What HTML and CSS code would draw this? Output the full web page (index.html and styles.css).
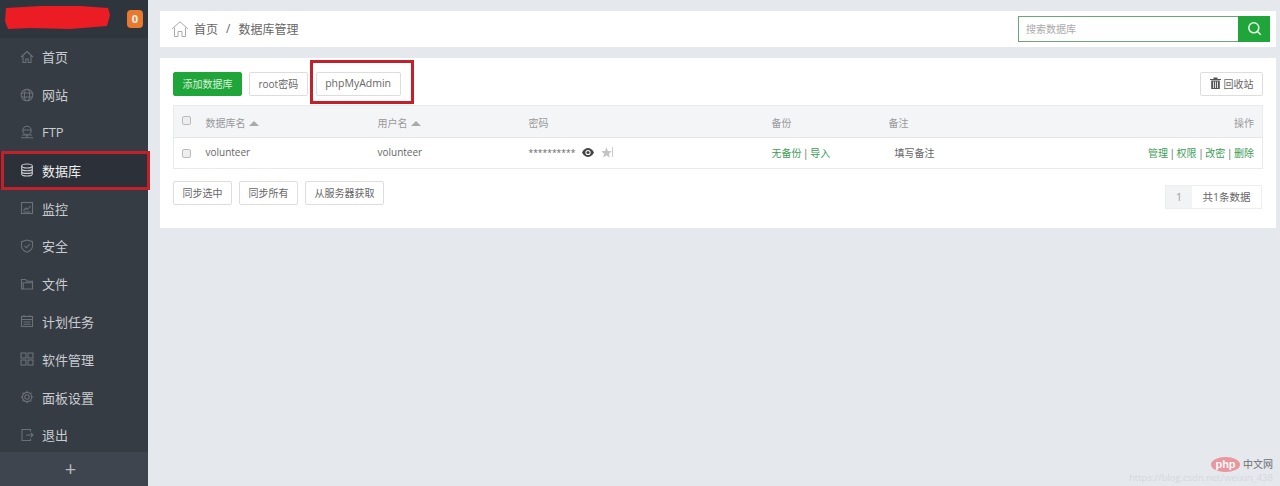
FILE: index.html
```html
<!DOCTYPE html>
<html lang="zh-CN">
  <head>
    <meta charset="UTF-8" />
    <meta name="viewport" content="width=device-width, initial-scale=1.0" />
    <title>数据库管理</title>
    <link rel="stylesheet" href="styles.css">
  </head>
  <body>
    <aside class="sidebar">
      <div class="logo-bar">
        <svg class="scribble" width="112" height="26" viewBox="0 0 112 26">
          <path d="M6 4 L40 2 L80 2 L108 4 L110 11 L107 22 L70 25 L30 24 L8 25 L5 17 Z" fill="#ec1c24" />
        </svg>
        <span class="badge">0</span>
      </div>
      <nav class="nav">
        <a class="nav-item">
          <svg class="nav-icon" viewBox="0 0 14 14"><path d="M1 7 L7 1.5 L13 7 M3 6 V12.5 H5.8 V9 H8.2 V12.5 H11 V6" /></svg>
          <span>首页</span>
        </a>
        <a class="nav-item">
          <svg class="nav-icon" viewBox="0 0 14 14"><circle cx="7" cy="7" r="5.8" /><ellipse cx="7" cy="7" rx="2.6" ry="5.8" /><path d="M1.5 5 H12.5 M1.5 9 H12.5" /></svg>
          <span>网站</span>
        </a>
        <a class="nav-item">
          <svg class="nav-icon" viewBox="0 0 14 14"><circle cx="7" cy="5.5" r="4.2" /><path d="M3 5 H11 M2 10 H12 M1 12.8 H13 M7 10 V12.8" /></svg>
          <span>FTP</span>
        </a>
        <a class="nav-item active">
          <svg class="nav-icon" viewBox="0 0 14 14"><ellipse cx="7" cy="3" rx="5.3" ry="2" /><path d="M1.7 3 V11 C1.7 12.2 3.8 13 7 13 C10.2 13 12.3 12.2 12.3 11 V3 M1.7 5.8 C1.7 7 3.8 7.8 7 7.8 C10.2 7.8 12.3 7 12.3 5.8 M1.7 8.4 C1.7 9.6 3.8 10.4 7 10.4 C10.2 10.4 12.3 9.6 12.3 8.4" /></svg>
          <span>数据库</span>
        </a>
        <a class="nav-item">
          <svg class="nav-icon" viewBox="0 0 14 14"><rect x="1.5" y="1.5" width="11" height="11" /><path d="M3.5 9.5 L6 7 L7.5 8.5 L10.5 5 M3.5 11 H10.5" /></svg>
          <span>监控</span>
        </a>
        <a class="nav-item">
          <svg class="nav-icon" viewBox="0 0 14 14"><path d="M7 1 L12.5 2.6 V7 C12.5 10 10 12 7 13.2 C4 12 1.5 10 1.5 7 V2.6 Z M4.5 6.8 L6.5 8.8 L9.8 5" /></svg>
          <span>安全</span>
        </a>
        <a class="nav-item">
          <svg class="nav-icon" viewBox="0 0 14 14"><path d="M1.5 12 V2.5 H5.5 L7 4.2 H12.5 V5.8 M1.5 12 H12.5 V5.8 H3.2 V12" /></svg>
          <span>文件</span>
        </a>
        <a class="nav-item">
          <svg class="nav-icon" viewBox="0 0 14 14"><rect x="1.5" y="2.5" width="11" height="10" /><path d="M1.5 5.5 H12.5 M4 1 V3 M10 1 V3 M3.5 8 H10.5 M3.5 10.3 H10.5" /></svg>
          <span>计划任务</span>
        </a>
        <a class="nav-item">
          <svg class="nav-icon" viewBox="0 0 14 14"><rect x="1" y="1" width="5" height="5" /><rect x="8" y="1" width="5" height="5" /><rect x="1" y="8" width="5" height="5" /><rect x="8" y="8" width="5" height="5" /></svg>
          <span>软件管理</span>
        </a>
        <a class="nav-item">
          <svg class="nav-icon" viewBox="0 0 14 14"><circle cx="7" cy="7" r="2.2" /><circle cx="7" cy="7" r="4.6" /><path d="M7 .8 V2.4 M7 11.6 V13.2 M.8 7 H2.4 M11.6 7 H13.2 M2.6 2.6 L3.8 3.8 M10.2 10.2 L11.4 11.4 M2.6 11.4 L3.8 10.2 M10.2 3.8 L11.4 2.6" /></svg>
          <span>面板设置</span>
        </a>
        <a class="nav-item">
          <svg class="nav-icon" viewBox="0 0 14 14"><path d="M10.5 3.5 V1.5 H2 V12.5 H10.5 V10.5 M6 7 H13 M10.8 4.8 L13 7 L10.8 9.2" /></svg>
          <span>退出</span>
        </a>
      </nav>
      <div class="sidebar-foot">+</div>
    </aside>

    <main class="main">
      <header class="crumb-bar">
        <div class="crumbs">
          <svg class="crumb-home" viewBox="0 0 18 18"><path d="M1 9 L9 1.8 L17 9 M3.5 7.5 V16.5 H7 V11.5 H11 V16.5 H14.5 V7.5" /></svg>
          <span>首页</span>
          <span class="crumb-sep">/</span>
          <span>数据库管理</span>
        </div>
        <div class="search">
          <input class="search-input" type="text" placeholder="搜索数据库" />
          <button class="search-btn">
            <svg width="15" height="15" viewBox="0 0 15 15"><circle cx="6.8" cy="6.8" r="5" /><path d="M10.5 10.5 L13.8 13.8" /></svg>
          </button>
        </div>
      </header>

      <section class="panel">
        <div class="toolbar">
          <div class="btn-group">
            <button class="btn btn-green">添加数据库</button>
            <button class="btn">root密码</button>
            <button class="btn btn-pma">phpMyAdmin</button>
          </div>
          <button class="btn btn-recycle">
            <svg width="11" height="12" viewBox="0 0 11 12"><path d="M0 2 H11 V3 H0 Z M3.5 2 V.5 H7.5 V2 M1.2 3.5 H9.8 V12 H1.2 Z" fill="#555" /><path d="M3.5 4.5 V11 M5.5 4.5 V11 M7.5 4.5 V11" stroke="#fff" stroke-width=".8" /></svg>
            回收站
          </button>
        </div>

        <table class="db-table">
          <colgroup>
            <col class="col-check" /><col class="col-name" /><col class="col-user" /><col class="col-pass" /><col class="col-backup" /><col />
            <col class="col-ops" />
          </colgroup>
          <thead>
            <tr>
              <th><input type="checkbox" class="check" /></th>
              <th>数据库名 <i class="sort"></i></th>
              <th>用户名 <i class="sort"></i></th>
              <th>密码</th>
              <th>备份</th>
              <th>备注</th>
              <th class="ops">操作</th>
            </tr>
          </thead>
          <tbody>
            <tr>
              <td><input type="checkbox" class="check" /></td>
              <td>volunteer</td>
              <td>volunteer</td>
              <td>
                <div class="pass">
                  <span class="stars">**********</span>
                  <svg width="12" height="9" viewBox="0 0 12 9"><path d="M0 4.5 C2 1 4 0 6 0 C8 0 10 1 12 4.5 C10 8 8 9 6 9 C4 9 2 8 0 4.5 Z" fill="#444" /><circle cx="6" cy="4.5" r="2.6" fill="#fff" /><circle cx="6" cy="4.5" r="1.6" fill="#444" /></svg>
                  <svg width="11" height="11" viewBox="0 0 11 11"><path d="M5.5 .5 L7 4 L10.8 4.3 L7.9 6.7 L8.8 10.5 L5.5 8.5 L2.2 10.5 L3.1 6.7 L.2 4.3 L4 4 Z" fill="#c4c4c4" /></svg>
                  <span class="cursor"></span>
                </div>
              </td>
              <td class="links"><a class="link">无备份</a> | <a class="link">导入</a></td>
              <td class="remark">填写备注</td>
              <td class="ops links"><a class="link">管理</a> | <a class="link">权限</a> | <a class="link">改密</a> | <a class="link">删除</a></td>
            </tr>
          </tbody>
        </table>

        <div class="table-foot">
          <div class="btn-group">
            <button class="btn">同步选中</button>
            <button class="btn">同步所有</button>
            <button class="btn">从服务器获取</button>
          </div>
          <div class="pager">
            <span class="page-num">1</span>
            <span class="page-total">共1条数据</span>
          </div>
        </div>
      </section>
    </main>

    <div class="watermark">
      <div class="wm-top"><span class="wm-logo">php</span><span class="wm-cn">中文网</span></div>
      <div class="wm-url">https://blog.csdn.net/weixin_438</div>
    </div>
  </body>
</html>
```

FILE: styles.css
```css
* {
  box-sizing: border-box;
}

html,
body {
  height: 486px;
  margin: 0;
  overflow: hidden;
}

body {
  display: flex;
  background-color: #e5e8ed;
  font-family: "Open Sans", "Noto Sans CJK SC", sans-serif;
  font-size: 12px;
  color: #666;
}

/* sidebar */
.sidebar {
  width: 148px;
  flex-shrink: 0;
  display: flex;
  flex-direction: column;
  background-color: #363c44;
  color: #c9ccd0;
}

.logo-bar {
  height: 38px;
  flex-shrink: 0;
  position: relative;
  display: flex;
  justify-content: flex-end;
  align-items: center;
  padding-right: 5px;
  background-color: #2f353c;
}

.scribble {
  position: absolute;
  left: 0;
  top: 4px;
}

.badge {
  width: 16px;
  height: 18px;
  border-radius: 4px;
  background-color: #e8792f;
  color: #f5f0e8;
  font-size: 11px;
  font-weight: 700;
  line-height: 18px;
  text-align: center;
}

.nav {
  flex: 1;
  min-height: 0;
}

.nav-item {
  height: 37.8px;
  display: flex;
  align-items: center;
  gap: 8px;
  padding-left: 20px;
  position: relative;
  font-size: 13px;
}

.nav-icon {
  width: 14px;
  height: 14px;
  fill: none;
  stroke: #6c7178;
  stroke-width: 1.1;
}

.nav-item.active {
  background-color: #2c3038;
  color: #f0f0f0;
}

.nav-item.active .nav-icon {
  stroke: #c9ccd0;
}

.nav-item.active::after {
  content: "";
  position: absolute;
  left: 1px;
  right: -2px;
  top: 0;
  bottom: -1px;
  border: 3px solid #c2202b;
}

.sidebar-foot {
  height: 34px;
  flex-shrink: 0;
  position: relative;
  padding-right: 7px;
  background-color: #3f454e;
  color: #b5b8bc;
  font-size: 20px;
  line-height: 34px;
  text-align: center;
}

/* main */
.main {
  flex: 1;
  padding: 11px 4px 0 12px;
}

.crumb-bar {
  height: 36px;
  display: flex;
  justify-content: space-between;
  align-items: center;
  padding: 0 6px 0 11px;
  margin-bottom: 11px;
  background-color: #fff;
}

.crumbs {
  display: flex;
  align-items: center;
  gap: 8px;
  margin-top: -1px;
  font-size: 12px;
  color: #666;
}

.crumb-home {
  width: 18px;
  height: 18px;
  margin-right: -3px;
  fill: none;
  stroke: #aaa;
  stroke-width: 1;
}

.search {
  display: flex;
  width: 252px;
  height: 26px;
  margin-top: -1px;
}

.search-input {
  flex: 1;
  min-width: 0;
  padding: 0 7px;
  border: 1px solid #6aa67a;
  border-right: none;
  font-family: inherit;
  font-size: 10px;
  outline: none;
}

.search-input::placeholder {
  color: #aaa;
}

.search-btn {
  width: 32px;
  padding: 0;
  border: none;
  background-color: #20a53a;
  display: flex;
  justify-content: center;
  align-items: center;
}

.search-btn svg {
  fill: none;
  stroke: #e4f3e6;
  stroke-width: 1.6;
}

.panel {
  height: 170px;
  padding: 14px 13px 0;
  background-color: #fff;
  position: relative;
}

.toolbar,
.table-foot {
  display: flex;
  justify-content: space-between;
}

.toolbar {
  margin-bottom: 9px;
}

.btn-group {
  display: flex;
  gap: 7px;
}

.btn {
  height: 24px;
  padding: 0 8.5px 2px;
  background-color: #fff;
  border: 1px solid #ddd;
  border-radius: 2px;
  color: #666;
  font-family: inherit;
  font-size: 10px;
  white-space: nowrap;
}

.btn-green {
  background-color: #20a53a;
  border-color: #20a53a;
  color: #d8f0dc;
}

.btn-pma {
  position: relative;
  margin-left: 1px;
  font-size: 10.5px;
}

.btn-pma::after {
  content: "";
  position: absolute;
  left: -7px;
  right: -14px;
  top: -13px;
  bottom: -9px;
  border: 3px solid #c2202b;
}

.btn-recycle {
  display: flex;
  align-items: center;
  gap: 3px;
}

.db-table {
  width: 1090px;
  table-layout: fixed;
  border-collapse: collapse;
  border: 1px solid #e8eaed;
}

.col-check { width: 32px; }
.col-name { width: 172px; }
.col-user { width: 151px; }
.col-pass { width: 243px; }
.col-backup { width: 117px; }
.col-ops { width: 300px; }

.db-table th,
.db-table td {
  padding: 0;
  text-align: left;
  font-size: 10px;
  font-weight: 400;
}

.db-table th {
  height: 32px;
  padding-top: 1px;
  background-color: #f4f5f7;
  color: #999;
  border-bottom: 1px solid #e4e6e9;
}

.db-table td {
  height: 31px;
  padding-bottom: 2px;
  color: #666;
}

.db-table .ops {
  text-align: right;
  padding-right: 8px;
}

.links {
  word-spacing: -1px;
}

.check {
  appearance: none;
  width: 9px;
  height: 9px;
  margin: 0 0 0 8px;
  vertical-align: middle;
  background-color: #eee;
  border: 1px solid #bbb;
  border-radius: 2px;
}

thead .check {
  margin-top: -5px;
}

.sort {
  display: inline-block;
  margin-left: 1px;
  border-left: 5px solid transparent;
  border-right: 5px solid transparent;
  border-bottom: 5px solid #aaa;
  vertical-align: 1px;
}

.pass {
  display: flex;
  align-items: center;
  gap: 7px;
}

.stars {
  font-size: 8.5px;
}

.cursor {
  width: 1px;
  height: 10px;
  margin-left: -7px;
  background-color: #ccc;
}

.link {
  color: #3d9c56;
}

.db-table td.remark {
  padding-left: 6px;
}

.table-foot {
  margin-top: 12px;
}

.pager {
  display: flex;
  height: 24px;
  margin: 4px 1px 0 0;
  border: 1px solid #eee;
  line-height: 22px;
  font-size: 10.5px;
}

.page-num {
  width: 26px;
  background-color: #f2f3f5;
  color: #999;
  text-align: center;
}

.page-total {
  width: 69px;
  text-align: center;
}

/* watermark */
.watermark {
  position: absolute;
  right: 7px;
  bottom: 3px;
  width: 152px;
  opacity: .75;
}

.wm-top {
  display: flex;
  justify-content: flex-end;
  align-items: center;
  gap: 3px;
}

.wm-logo {
  width: 29px;
  height: 15px;
  border-radius: 50%;
  background-color: #e97c84;
  color: #fff;
  font-family: "Liberation Sans", sans-serif;
  font-size: 11px;
  font-weight: 700;
  line-height: 14px;
  text-align: center;
}

.wm-cn {
  font-size: 10px;
  color: #444;
  line-height: 15px;
}

.wm-url {
  height: 11px;
  font-size: 9.5px;
  line-height: 11px;
  color: #d0d4d9;
  white-space: nowrap;
  text-align: right;
}
```
